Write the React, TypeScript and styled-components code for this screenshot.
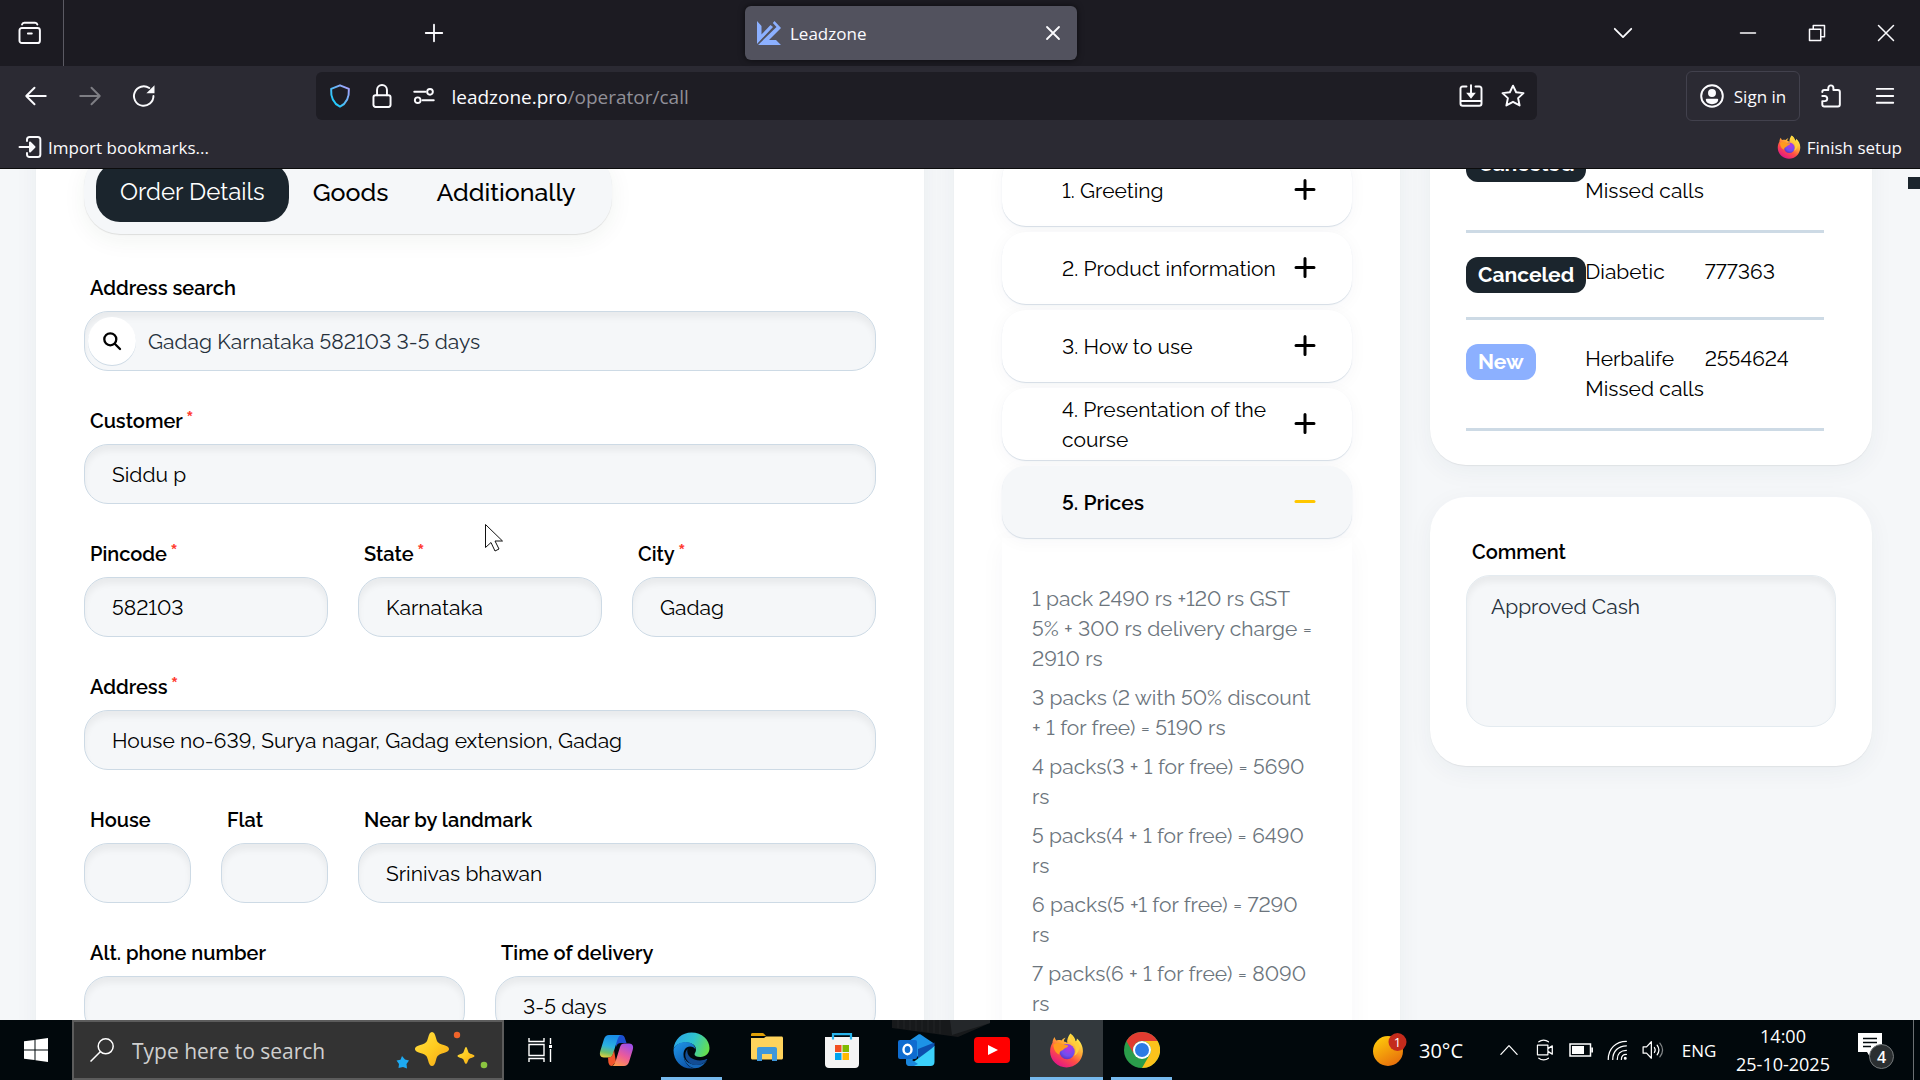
import React from "react";
import styled, { createGlobalStyle, css } from "styled-components";

const pageFont = `Raleway, Lato, "Open Sans", sans-serif`;
const systemFont = `"Segoe UI", "Open Sans", "Noto Sans", sans-serif`;

const GlobalStyle = createGlobalStyle`
  *, *::before, *::after { box-sizing: border-box; }
  body { margin: 0; background: #f5f7f9; font-family: ${pageFont}; font-variant-numeric: lining-nums; }
  button, input, textarea { font: inherit; font-variant-numeric: lining-nums; color: inherit; margin: 0; }
  button { border: 0; padding: 0; background: none; }
  svg { display: block; flex: none; }
`;

/* ---------- browser chrome ---------- */

const Screen = styled.div`
  height: 100vh;
  display: flex;
  flex-direction: column;
  overflow: hidden;
`;

const Chrome = styled.header`
  flex: none;
  background: #2b2a33;
  color: #fbfbfe;
  border-bottom: 1px solid #0c0c0d;
  font-family: ${systemFont};
  font-size: 17px;
`;

const TabStrip = styled.div`
  display: flex;
  align-items: center;
  height: 66px;
  background: #1c1b22;
`;

const IconButton = styled.button<{ $w?: number; $dim?: boolean }>`
  display: flex;
  flex: none;
  align-items: center;
  justify-content: center;
  width: ${(p) => p.$w ?? 54}px;
  height: 48px;
  opacity: ${(p) => (p.$dim ? 0.4 : 1)};
`;

const FirefoxView = styled.div`
  display: flex;
  align-items: center;
  height: 66px;
  padding-right: 3px;
  border-right: 1px solid #5b5a63;
`;

const Spacer = styled.div<{ $grow: number }>`
  flex: ${(p) => p.$grow} 1 0;
`;

const Tab = styled.div`
  display: flex;
  align-items: center;
  gap: 9px;
  width: 332px;
  height: 54px;
  padding: 0 12px;
  border-radius: 6px;
  background: #52525e;
  box-shadow: 0 0 6px rgba(0, 0, 0, 0.6);
`;

const TabTitle = styled.span`
  flex: 1;
`;

const WindowButtons = styled.div`
  display: flex;
  margin-left: 63px;
`;

const NavBar = styled.div`
  display: flex;
  align-items: center;
  height: 60px;
  padding: 0 8px 0 9px;
`;

const UrlBar = styled.div`
  display: flex;
  flex: 1219 1 0;
  align-items: center;
  height: 48px;
  padding: 0 3px;
  border-radius: 6px;
  background: #1e1d24;
`;

const Address = styled.div`
  flex: 1;
  padding: 2px 0 0 6px;
  font-size: 19px;
  color: #919098;
  b {
    font-weight: 400;
    color: #fbfbfe;
  }
`;

const SignIn = styled.button`
  display: flex;
  align-items: center;
  justify-content: center;
  gap: 10px;
  width: 114px;
  height: 50px;
  margin-right: 4px;
  border: 1px solid #42414d;
  border-radius: 6px;
`;

const Bookmarks = styled.div`
  display: flex;
  align-items: center;
  justify-content: space-between;
  height: 42px;
  padding: 0 18px;
`;

const Bookmark = styled.button`
  display: flex;
  align-items: center;
  gap: 6px;
`;

/* ---------- page ---------- */

const Viewport = styled.main`
  display: flex;
  flex: 1;
  min-height: 0;
  overflow: hidden;
  background: #f5f7f9;
  color: #000;
  font-size: 21px;
  line-height: 30px;
`;

const Columns = styled.div`
  display: grid;
  flex: 1;
  grid-template-columns: 888fr 446fr 442fr;
  gap: 30px;
  height: max-content;
  margin-top: -67px;
  padding: 0 36px;
`;

const ScrollTrack = styled.div`
  width: 12px;
  padding-top: 8px;
`;

const ScrollThumb = styled.div`
  height: 12px;
  background: #1b252d;
`;

const Panel = styled.section<{ $pad: string }>`
  padding: ${(p) => p.$pad};
  border-radius: 36px;
  background: #fff;
  box-shadow: 0 1px 1px rgba(0, 0, 0, 0.06), 0 6px 24px rgba(27, 60, 80, 0.05);
`;

const SideColumn = styled.div`
  display: flex;
  flex-direction: column;
  gap: 32px;
`;

const Tabs = styled.div`
  display: flex;
  width: max-content;
  padding: 12px;
  border-radius: 36px;
  background: #f5f7f9;
  box-shadow: 0 1px 1px rgba(0, 0, 0, 0.1), 0 6px 24px rgba(27, 60, 40, 0.06);
`;

const TabButton = styled.button<{ $active?: boolean }>`
  height: 60px;
  padding: 0 24px;
  border-radius: 24px;
  font-size: 25px;
  font-weight: 500;
  ${(p) =>
    p.$active &&
    css`
      background: #1b252d;
      color: #fff;
      font-size: 24px;
      font-weight: 400;
    `}
`;

const Form = styled.form`
  display: grid;
  grid-template-columns: repeat(6, 1fr);
  gap: 35px 30px;
  margin-top: 39px;
`;

const Field = styled.div<{ $span?: number }>`
  display: flex;
  flex-direction: column;
  gap: 8px;
  min-width: 0;
  grid-column: span ${(p) => p.$span ?? 6};
`;

const Label = styled.label`
  height: 30px;
  padding-left: 6px;
  font-size: 20px;
  font-weight: 600;
`;

const Star = styled.span`
  margin-left: 3px;
  color: #ff3b30;
  font-size: 24px;
  line-height: 24px;
`;

const inset = css`
  border: 1px solid #cddae5;
  border-radius: 24px;
  background: #f5f7f9;
  box-shadow: inset 0 6px 6px rgba(0, 0, 0, 0.05);
  outline: 0;
`;

const Input = styled.input`
  ${inset}
  width: 100%;
  height: 60px;
  padding: 0 27px;
`;

const SearchBox = styled.div`
  ${inset}
  display: flex;
  align-items: center;
  gap: 12px;
  height: 60px;
  padding: 0 3px;
`;

const SearchButton = styled.button`
  display: flex;
  align-items: center;
  justify-content: center;
  width: 48px;
  height: 48px;
  border-radius: 24px;
  background: #fff;
  box-shadow: 0 1px 0 #cddae5;
`;

const SearchInput = styled.input`
  flex: 1;
  height: 48px;
  padding: 0;
  border: 0;
  outline: 0;
  background: none;
  color: #26313c;
`;

const Script = styled.div`
  display: flex;
  flex-direction: column;
  gap: 6px;
`;

const Step = styled.button<{ $open?: boolean }>`
  display: flex;
  align-items: center;
  justify-content: space-between;
  height: 72px;
  padding: 0 36px 0 60px;
  border-radius: 24px;
  background: ${(p) => (p.$open ? "#f5f7f9" : "#fff")};
  color: ${(p) => (p.$open ? "#ffc700" : "#000")};
  font-weight: ${(p) => (p.$open ? 600 : 400)};
  text-align: left;
  box-shadow: 0 1px 1px #d5dde6, 0 3px 18px rgba(27, 60, 80, 0.04);
`;

const StepTitle = styled.span`
  padding-top: 2px;
  color: #000;
  white-space: nowrap;
`;

const StepBody = styled.div`
  display: flex;
  flex-direction: column;
  gap: 9px;
  padding: 46px 0 60px 30px;
  color: #6c757d;
  box-shadow: 0 6px 24px rgba(27, 60, 80, 0.04);
  white-space: nowrap;
`;

const Price = styled.p`
  margin: 0;
`;

const Orders = styled.table`
  display: block;
  margin-right: 12px;
  tbody {
    display: block;
  }
`;

const Order = styled.tr`
  display: grid;
  grid-template-columns: repeat(3, 1fr);
  padding: 24px 0;
  border-bottom: 3px solid #cddae5;
  td {
    padding: 0;
    min-width: 0;
    white-space: nowrap;
  }
`;

const Badge = styled.span<{ $tone: string }>`
  display: block;
  width: max-content;
  height: 36px;
  margin-bottom: -6px;
  padding: 0 12px;
  border-radius: 12px;
  background: ${(p) => p.$tone};
  color: #fff;
  font-weight: 700;
  line-height: 36px;
`;

const ShortOrder = styled(Order)`
  padding-bottom: 30px;
`;

const Comment = styled.textarea`
  ${inset}
  height: 152px;
  padding: 16px 24px;
  border-color: #e4ebf0;
  color: #26313c;
  line-height: 30px;
  resize: none;
`;

const Pointer = styled.svg`
  position: absolute;
  left: 485px;
  top: 524px;
`;

/* ---------- taskbar ---------- */

const Taskbar = styled.footer`
  position: relative;
  display: flex;
  flex: none;
  height: 60px;
  background: #01080c;
  color: #fff;
  font-family: ${systemFont};
  font-size: 17px;
`;

const Wallpaper = styled.svg`
  position: absolute;
  left: 892px;
  top: 0;
`;

const TaskSearch = styled.label`
  display: flex;
  align-items: center;
  width: 432px;
  padding: 0 14px 0 16px;
  border: 2px solid #5c5c5c;
  background: #333;
  font-size: 21px;
  input {
    flex: 1;
    min-width: 0;
    margin-left: 18px;
    padding: 2px 0 0;
    border: 0;
    outline: 0;
    background: none;
  }
  input::placeholder {
    color: #cfcfcf;
    opacity: 1;
  }
`;

const TaskButton = styled.button<{ $w?: number }>`
  display: flex;
  flex: none;
  align-items: center;
  justify-content: center;
  width: ${(p) => p.$w ?? 36}px;
  height: 60px;
`;

const Apps = styled.div`
  position: relative;
  display: flex;
  gap: 2px;
  margin-left: 4px;
`;

const TaskApp = styled.button<{ $state?: "open" | "active" }>`
  display: flex;
  align-items: center;
  justify-content: center;
  width: 73px;
  height: 60px;
  background: ${(p) =>
    p.$state === "active"
      ? "linear-gradient(#76b9ed, #76b9ed) bottom / 73px 3px no-repeat, #33393d"
      : p.$state === "open"
        ? "linear-gradient(#76b9ed, #76b9ed) bottom / 61px 3px no-repeat"
        : "none"};
`;

const Tray = styled.div`
  display: flex;
  margin-left: auto;
`;

const Weather = styled.button`
  display: flex;
  align-items: center;
  gap: 12px;
  padding-right: 28px;
  font-size: 20px;
`;

const Clock = styled.button`
  width: 112px;
  font-size: 18px;
  line-height: 28px;
`;

const ShowDesktop = styled.button`
  width: 7px;
  border-left: 1px solid #6b7073;
`;

/* ---------- icons ---------- */

type IconProps = { size?: number; sw?: number; children: React.ReactNode };
const Icon = ({ size = 24, sw = 1.3, children }: IconProps) => (
  <svg width={size} height={size} viewBox="0 0 16 16" fill="none" stroke="currentColor" strokeWidth={sw} strokeLinecap="round" strokeLinejoin="round">
    {children}
  </svg>
);

const Fox = ({ size, id }: { size: number; id: string }) => (
  <svg width={size} height={size} viewBox="0 0 32 32">
    <defs>
      <linearGradient id={id + "a"} x1="0.8" y1="0.05" x2="0.25" y2="0.95">
        <stop offset="0.05" stopColor="#fff44f" />
        <stop offset="0.4" stopColor="#ffa436" />
        <stop offset="0.65" stopColor="#ff4f44" />
        <stop offset="1" stopColor="#e31587" />
      </linearGradient>
      <radialGradient id={id + "b"} cx="0.6" cy="0.3" r="0.8">
        <stop offset="0" stopColor="#b833e1" />
        <stop offset="0.6" stopColor="#6e4ff0" />
        <stop offset="1" stopColor="#5a2cb0" />
      </radialGradient>
    </defs>
    <path fill={`url(#${id}a)`} d="M19.5 0.5c3.400 2.200 4.500 5 4.800 7.200 1-.5 1.200-1.700 1.200-2.700 3.600 3 5.800 7.500 5.500 12.200C30.500 25.500 24 31.500 16 31.500S1 25.300 1 17c0-3.200.8-5.800 2.200-8C3.200 7 4 5 5.200 3.600c.2 1.500.8 2.600 1.800 3.200 1.500-.6 3-.6 4.400 0 1-1.400 2.200-2.200 3.800-2.500-1 1-1.600 2.200-1.600 3.400 1.300.3 2.400.7 3.100 1.400C16.200 6.500 17.500 3 19.500.5z" />
    <circle cx="16.500" cy="17" r="7" fill={`url(#${id}b)`} />
    <path fill="#ff9a1f" d="M4 10.500c2-1.500 5-2 7.500-.6 1.600 1 3.400 1.200 5.200 1.200.9 0 1 .9.300 1.500-.9.900-2.200 1.200-3.100 1.700-1 .5-.9 1.400-2.200 1.800-1.300.5-2.400 1.700-2.200 3.600C6 18.500 4 14.500 4 10.500z" />
    <path fill="#ffcf3a" d="M19.500 1c-1 4 1 6 3 8.500 2.500 3.500 2.500 8 .4 11.300 3.600-1.700 5.500-6 4.400-10.300C26.500 7 24.500 7.500 23.700 8c-.3-3-1.700-5.500-4.200-7z" />
  </svg>
);

const Plus = ({ minus }: { minus?: boolean }) => (
  <svg width="22" height="22" viewBox="0 0 22 22" stroke="currentColor" strokeWidth="3" strokeLinecap="round">
    <path d={minus ? "M2 10.500h18" : "M2 10.500h18M11 1.500v18"} />
  </svg>
);

const Leadzone = () => (
  <svg width="24" height="24" viewBox="0 0 24 24">
    <path fill="#8cb0ff" d="M0 0 4.500 5v8.500L13.500 4l2.500 2L0 23zM17.500 0 24 7 12 19h7l5 5H1L19.500 6 15.800 2z" />
    <path stroke="#52525e" strokeWidth="1" fill="none" d="M.5 23.500 17.500 5.500 14.500 2.500" />
  </svg>
);

const Sparkles = () => (
  <svg width="92" height="40" viewBox="0 0 92 40">
    <defs>
      <linearGradient id="gold" x1="0" y1="0" x2="1" y2="1">
        <stop offset="0" stopColor="#ffe04a" />
        <stop offset="0.5" stopColor="#ffcb1f" />
        <stop offset="1" stopColor="#f2a31b" />
      </linearGradient>
    </defs>
    <path fill="url(#gold)" d="M36 2c2 0 3 2 4 6 1 4 2 5 6 6.500 5 1.500 7 2.500 7 4.500s-2 3-7 4.500c-4 1.500-5 2.500-6 6.500-1 4-2 6-4 6s-3-2-4-6c-1-4-2-5-6-6.500-5-1.500-7-2.500-7-4.500s2-3 7-4.500c4-1.500 5-2.500 6-6.500 1-4 2-6 4-6z" />
    <path fill="url(#gold)" d="M70 17c1.200 0 2 5 3 6s5.500 1.500 5.500 3-4.500 2-5.500 3-1.800 5-3 5-2-4-3-5-5.500-1.500-5.500-3 4.500-2 5.500-3 1.800-6 3-6z" />
    <path fill="#1eaaf1" d="m6 26 3 3.500 4 1-2.500 3.500.5 4.500-4-1.500L2.500 38 3 34l-2.500-3.500 4-.8z" />
    <circle cx="61" cy="5" r="3.200" fill="#f0642a" />
    <circle cx="88" cy="35" r="3.300" fill="#8bc540" />
  </svg>
);

const Copilot = () => (
  <svg width="35" height="31" viewBox="0 0 35 31">
    <defs>
      <linearGradient id="cpA" x1="0.3" y1="0" x2="0.1" y2="1">
        <stop offset="0" stopColor="#1a8fe8" />
        <stop offset="0.45" stopColor="#2bb0e0" />
        <stop offset="0.75" stopColor="#6fc06a" />
        <stop offset="1" stopColor="#f5d13a" />
      </linearGradient>
      <linearGradient id="cpB" x1="0.7" y1="0" x2="0.2" y2="1">
        <stop offset="0" stopColor="#a04ee6" />
        <stop offset="0.5" stopColor="#ec5b9a" />
        <stop offset="1" stopColor="#ff9a4a" />
      </linearGradient>
    </defs>
    <path fill="#1b4fd0" d="M17 0h5c2.500 0 3.500 1.500 4.200 4L27.500 8H22c-3 0-4 1.500-5 4z" />
    <path fill="url(#cpA)" d="M10 0h12c-2.300.8-3 3-4 6l-4 13c-.8 2.500-2 3.500-4.500 3.500H5C1 22.500.3 19.500 1.300 16L5 4C6 1.200 7.500 0 10 0z" />
    <path fill="#f2552c" d="M9 22.500c3 0 4.200-1.500 5-4L15 15l2 12-4 4c-2 0-3-1-3.600-3.500z" />
    <path fill="url(#cpB)" d="M25 31H13c2.300-.8 3-3 4-6l4-13c.8-2.500 2-3.500 4.500-3.500H30c4 0 4.700 3 3.700 6.500L30 27c-1 2.800-2.500 4-5 4z" />
  </svg>
);

const Edge = () => (
  <svg width="37" height="37" viewBox="0 0 37 37">
    <defs>
      <linearGradient id="edA" x1="0" y1="0.3" x2="1" y2="0.6">
        <stop offset="0" stopColor="#2ba6e8" />
        <stop offset="0.5" stopColor="#2fc3cf" />
        <stop offset="1" stopColor="#67e04b" />
      </linearGradient>
      <linearGradient id="edB" x1="0" y1="0" x2="0.6" y2="1">
        <stop offset="0" stopColor="#1f98ea" />
        <stop offset="1" stopColor="#0e54a8" />
      </linearGradient>
    </defs>
    <path fill="url(#edA)" d="M.5 17C1.500 7 9 .5 18.500.5 29 .5 36.500 8 36.500 16c0 5.500-4 9-9 9-4 0-6-1.500-6-2.800 0-1 1.500-1.700 1.500-4.700 0-4-4-7-9.500-7C7 10.500 2 13 .5 17z" />
    <path fill="url(#edB)" d="M.5 18c.5-4 5.500-8 12-8 5.500 0 10 3 10 7.500-1-2-3-3-5.500-3-4.500 0-6.500 4-6.500 8C10.500 30 16 36.500 22 36.200 10 38.500.5 30 .5 18z" />
    <path fill="#124c94" d="M14.500 17c-5 6-1 15 8 16 5 .5 9-2 11.500-5 .6-.8 0-1.300-.8-.9-2 1-4 1.400-6.200 1.400-8 0-14-5-12.500-11.500z" />
    <path fill="#1566b8" d="M10.500 22c0 7 5 13.500 11.500 14.200 5 0 9-3.500 11.800-7.500-3 3-7.300 4.800-11.300 4.300-7-1-12-5-12-11z" />
  </svg>
);

const Explorer = () => (
  <svg width="32" height="34" viewBox="0 0 32 34">
    <path fill="#e0a008" d="M0 1.500C0 .6.600 0 1.500 0h10c.7 0 1 .2 1.500.8L15 3H0z" />
    <path fill="#ffd35c" d="M0 4h13l2-1.500h15.500c.9 0 1.500.6 1.500 1.500v20c0 .9-.6 1.500-1.500 1.500h-29C.6 25.500 0 24.900 0 24z" transform="translate(0 1)" />
    <path fill="#3f97da" d="M6 28V16c0-1.200.8-2 2-2h16c1.200 0 2 .8 2 2v12h-5v-7h-10v7z" />
  </svg>
);

const Store = () => (
  <svg width="36" height="37" viewBox="0 0 36 37">
    <path fill="none" stroke="#27b4ec" strokeWidth="2.200" d="M9 8V2.200h18V8" />
    <path fill="#f4f4f4" d="M1 5h34v27c0 2.500-1.500 4-4 4H5c-2.500 0-4-1.500-4-4z" />
    <path fill="none" stroke="#27b4ec" strokeWidth="2.200" d="M9 4v3.500M27 4v3.500" />
    <path fill="#f25022" d="M11 13h6.500v7H11z" />
    <path fill="#7fba00" d="M18.500 13H25v7h-6.500z" />
    <path fill="#00a4ef" d="M11 21h6.500v7H11z" />
    <path fill="#ffb900" d="M18.500 21H25v7h-6.500z" />
  </svg>
);

const Outlook = () => (
  <svg width="37" height="32" viewBox="0 0 37 32">
    <path fill="#1d93e6" d="M8 9 20 .8c1-.6 2-.6 3 0L36 9.500V12L14 26H8z" />
    <path fill="#0c4fae" d="M20 15 36.500 8.500V13L20 25z" />
    <path fill="#3bd0fb" d="M36.500 12v16c0 2.500-1.500 4-4 4H10L33 15z" />
    <path fill="#1a86dc" d="M8 22 20 30l-4 2h-5c-2 0-3-1.500-3-3z" />
    <rect x="0" y="6" width="19" height="19" rx="2" fill="#0f6cd0" />
    <ellipse cx="9.500" cy="15.500" rx="4" ry="4.700" fill="none" stroke="#fff" strokeWidth="2.400" />
  </svg>
);

const YouTube = () => (
  <svg width="36" height="26" viewBox="0 0 36 26">
    <rect width="36" height="26" rx="4" fill="#f00" />
    <path fill="#fff" d="m14 8 10 5-10 5z" />
  </svg>
);

const ChromeLogo = () => (
  <svg width="36" height="36" viewBox="0 0 36 36">
    <circle cx="18" cy="18" r="18" fill="#2a9d4a" />
    <path fill="#e03c31" d="M2.400 9A18 18 0 0 1 33.600 9H18a9 9 0 0 0-7.800 13.500z" />
    <path fill="#fcc21b" d="M33.600 9A18 18 0 0 1 18 36l7.800-13.500A9 9 0 0 0 18 9z" />
    <circle cx="18" cy="18" r="9" fill="#fff" />
    <circle cx="18" cy="18" r="7" fill="#2c7be5" />
  </svg>
);

const Sun = () => (
  <svg width="34" height="34" viewBox="0 0 34 34">
    <defs>
      <linearGradient id="sun" x1="0.2" y1="0" x2="0.8" y2="1">
        <stop offset="0" stopColor="#ffcb0a" />
        <stop offset="1" stopColor="#e66a0c" />
      </linearGradient>
    </defs>
    <circle cx="15" cy="18" r="15" fill="url(#sun)" />
    <circle cx="24.500" cy="9" r="9" fill="#c42b1c" />
    <text x="24.500" y="14" fill="#fff" fontFamily="Open Sans" fontSize="13" textAnchor="middle">1</text>
  </svg>
);

const Notifications = () => (
  <svg width="38" height="38" viewBox="0 0 38 38">
    <path fill="#fff" d="M1 2h24v19H17l-4 5-3-5H1z" />
    <path stroke="#01080c" strokeWidth="1.400" d="M6 7.500h14M6 11.500h14M6 15.500h8" />
    <circle cx="24.500" cy="25.500" r="12" fill="#2b2f31" stroke="#74787a" />
    <text x="24.500" y="31.500" fill="#fff" fontFamily="Open Sans" fontSize="16" fontWeight="600" textAnchor="middle">4</text>
  </svg>
);

/* ---------- data ---------- */

const steps = [
  { title: "1. Greeting" },
  { title: "2. Product information" },
  { title: "3. How to use" },
  { title: "4. Presentation of the\ncourse" },
  { title: "5. Prices", open: true },
];

const prices = [
  "1 pack 2490 rs +120 rs GST\n5% + 300 rs delivery charge =\n2910 rs",
  "3 packs (2 with 50% discount\n+ 1 for free) = 5190 rs",
  "4 packs(3 + 1 for free) = 5690\nrs",
  "5 packs(4 + 1 for free) = 6490\nrs",
  "6 packs(5 +1 for free) = 7290\nrs",
  "7 packs(6 + 1 for free) = 8090\nrs",
];

const fields = [
  { id: "customer", label: "Customer", value: "Siddu p", required: true, span: 6 },
  { id: "pincode", label: "Pincode", value: "582103", required: true, span: 2 },
  { id: "state", label: "State", value: "Karnataka", required: true, span: 2 },
  { id: "city", label: "City", value: "Gadag", required: true, span: 2 },
  { id: "address", label: "Address", value: "House no-639, Surya nagar, Gadag extension, Gadag", required: true, span: 6 },
  { id: "house", label: "House", value: "", span: 1 },
  { id: "flat", label: "Flat", value: "", span: 1 },
  { id: "landmark", label: "Near by landmark", value: "Srinivas bhawan", span: 4 },
  { id: "phone", label: "Alt. phone number", value: "", span: 3 },
  { id: "delivery", label: "Time of delivery", value: "3-5 days", span: 3 },
];

const Lines = ({ text }: { text: string }) => (
  <>
    {text.split("\n").map((line, i) => (
      <React.Fragment key={i}>
        {i > 0 && <br />}
        {line}
      </React.Fragment>
    ))}
  </>
);

/* ---------- sections ---------- */

const BrowserChrome = () => (
  <Chrome>
    <TabStrip>
      <FirefoxView>
        <IconButton $w={60} aria-label="Recent browsing">
          <Icon>
            <rect x="1" y="4.700" width="13.600" height="10" rx="1.600" />
            <path d="M2.700 2.300c.2-.8.700-1.200 1.500-1.200h7.200c.8 0 1.300.4 1.500 1.200M6.600 8.300h2.600" />
          </Icon>
        </IconButton>
      </FirefoxView>
      <Spacer $grow={343} />
      <IconButton aria-label="New tab">
        <Icon sw={1.200}><path d="M2.500 8h11M8 2.500v11" /></Icon>
      </IconButton>
      <Spacer $grow={284} />
      <Tab>
        <Leadzone />
        <TabTitle>Leadzone</TabTitle>
        <IconButton $w={24} aria-label="Close tab">
          <Icon sw={1.200}><path d="m4 4 8 8M12 4l-8 8" /></Icon>
        </IconButton>
      </Tab>
      <Spacer $grow={519} />
      <IconButton aria-label="List all tabs">
        <Icon sw={1.200}><path d="m2.500 5.200 5.500 5.500 5.500-5.500" /></Icon>
      </IconButton>
      <WindowButtons>
        <IconButton $w={69} aria-label="Minimize"><Icon sw={1}><path d="M3 8h10" /></Icon></IconButton>
        <IconButton $w={69} aria-label="Restore">
          <Icon sw={1}><path d="M3 5.500h7.500V13H3zM5.500 5.200V3H13v7.500h-2.200" /></Icon>
        </IconButton>
        <IconButton $w={69} aria-label="Close"><Icon sw={1}><path d="m3 3 10 10M13 3 3 13" /></Icon></IconButton>
      </WindowButtons>
    </TabStrip>
    <NavBar>
      <IconButton aria-label="Back"><Icon><path d="M1.500 8h13M7 2.500 1.500 8 7 13.500" /></Icon></IconButton>
      <IconButton aria-label="Forward" $dim><Icon><path d="M1.500 8h13M9 2.500 14.500 8 9 13.500" /></Icon></IconButton>
      <IconButton aria-label="Reload">
        <Icon><path d="M14.300 8A6.500 6.500 0 1 1 11.500 2.700" /><path fill="currentColor" stroke="none" d="M15 .8v5.400H9.600z" /></Icon>
      </IconButton>
      <Spacer $grow={146} />
      <UrlBar>
        <IconButton $w={42} aria-label="Tracking protection">
          <svg width="24" height="24" viewBox="0 0 16 16" fill="none" strokeWidth="1.300" strokeLinejoin="round">
            <defs>
              <linearGradient id="shield" x1="1" y1="0" x2="0" y2="1">
                <stop offset="0" stopColor="#b5a0ff" />
                <stop offset="0.500" stopColor="#5bb8f5" />
                <stop offset="1" stopColor="#00d5ff" />
              </linearGradient>
            </defs>
            <path stroke="url(#shield)" d="M8 .9 13.900 3.300c.3 5-1.400 9.600-5.900 11.800C3.500 12.900 1.800 8.300 2.100 3.300z" />
          </svg>
        </IconButton>
        <IconButton $w={42} aria-label="Connection secure">
          <Icon><rect x="2.300" y="7.500" width="11.400" height="7.800" rx="1.400" /><path d="M4.700 7.500V4a3.300 3.300 0 0 1 6.600 0v3.500" /></Icon>
        </IconButton>
        <IconButton $w={42} aria-label="Permissions">
          <Icon><path d="M1.500 5.200h7.500M14.500 10.800H7" /><circle cx="12" cy="5.200" r="1.900" /><circle cx="3.800" cy="10.800" r="1.900" /></Icon>
        </IconButton>
        <Address><b>leadzone.pro</b>/operator/call</Address>
        <IconButton $w={42} aria-label="Install site">
          <Icon>
            <path d="M5 1.700H2.500c-1 0-1.500.6-1.500 1.500V13c0 .9.600 1.500 1.500 1.500h11c.9 0 1.500-.6 1.500-1.500V3.200c0-.9-.5-1.500-1.500-1.500H11M1 11.300h14M8 .8v6" />
            <path fill="currentColor" stroke="none" d="M4.800 5.800h6.400L8 9.800z" />
          </Icon>
        </IconButton>
        <IconButton $w={42} aria-label="Bookmark this page">
          <Icon><path d="m8 1.100 2.100 4.400 4.900.6-3.600 3.300 1 4.900L8 11.900l-4.400 2.400 1-4.900L1 6.100l4.900-.6z" /></Icon>
        </IconButton>
      </UrlBar>
      <Spacer $grow={150} />
      <SignIn>
        <Icon>
          <circle cx="8" cy="8" r="7.200" />
          <circle cx="8" cy="6" r="2" fill="currentColor" />
          <path fill="currentColor" d="M4.500 10.500h7c0 1.300-1.500 2.300-3.500 2.300s-3.500-1-3.500-2.300z" />
        </Icon>
        Sign in
      </SignIn>
      <IconButton aria-label="Extensions">
        <Icon>
          <path d="M2.200 5.300c0-.8.500-1.300 1.300-1.300h2.700V2.600a1.700 1.700 0 0 1 3.400 0V4h3c.8 0 1.300.5 1.300 1.300v8.400c0 .8-.5 1.300-1.300 1.300H3.500c-.8 0-1.300-.5-1.300-1.300v-2.300h1.600a1.700 1.700 0 0 0 0-3.400H2.200" />
        </Icon>
      </IconButton>
      <IconButton aria-label="Open application menu">
        <Icon sw={1.200}><path d="M2.500 3.300h11M2.500 8h11M2.500 12.500h11" /></Icon>
      </IconButton>
    </NavBar>
    <Bookmarks>
      <Bookmark>
        <Icon>
          <path d="M6 4V3c0-1 .6-1.700 1.700-1.700h5.500c1 0 1.700.7 1.700 1.700v10c0 1-.7 1.700-1.700 1.700H7.700C6.600 14.700 6 14 6 13v-1M1 8h7" />
          <path fill="currentColor" d="m8 5 3 3-3 3z" />
        </Icon>
        Import bookmarks...
      </Bookmark>
      <Bookmark>
        <Fox size={24} id="foxSmall" />
        Finish setup
      </Bookmark>
    </Bookmarks>
  </Chrome>
);

const OrderPanel = () => (
  <Panel $pad="48px 48px 60px">
    <Tabs>
      <TabButton $active>Order Details</TabButton>
      <TabButton>Goods</TabButton>
      <TabButton>Additionally</TabButton>
    </Tabs>
    <Form onSubmit={(e) => e.preventDefault()}>
      <Field>
        <Label htmlFor="search">Address search</Label>
        <SearchBox>
          <SearchButton aria-label="Search">
            <svg width="20" height="20" viewBox="0 0 20 20" fill="none" stroke="#000" strokeWidth="2.300" strokeLinecap="round">
              <circle cx="8.300" cy="8.300" r="6" />
              <path d="m13 13 5 5" />
            </svg>
          </SearchButton>
          <SearchInput id="search" defaultValue="Gadag Karnataka 582103 3-5 days" />
        </SearchBox>
      </Field>
      {fields.map((f) => (
        <Field key={f.id} $span={f.span}>
          <Label htmlFor={f.id}>
            {f.label}
            {f.required && <Star>*</Star>}
          </Label>
          <Input id={f.id} defaultValue={f.value} />
        </Field>
      ))}
    </Form>
  </Panel>
);

const ScriptPanel = () => (
  <Panel $pad="52px 48px 0">
    <Script>
      {steps.map((s) => (
        <Step key={s.title} $open={s.open}>
          <StepTitle><Lines text={s.title} /></StepTitle>
          <Plus minus={s.open} />
        </Step>
      ))}
    </Script>
    <StepBody>
      {prices.map((p) => (
        <Price key={p}><Lines text={p} /></Price>
      ))}
    </StepBody>
  </Panel>
);

const HistoryPanels = () => (
  <SideColumn>
    <Panel $pad="20px 36px 34px">
      <Orders>
        <tbody>
          <Order>
            <td><Badge $tone="#1b252d">Canceled</Badge></td>
            <td><br />Missed calls</td>
            <td />
          </Order>
          <ShortOrder>
            <td><Badge $tone="#1b252d">Canceled</Badge></td>
            <td>Diabetic</td>
            <td>777363</td>
          </ShortOrder>
          <Order>
            <td><Badge $tone="#8cb0ff">New</Badge></td>
            <td>Herbalife<br />Missed calls</td>
            <td>2554624</td>
          </Order>
        </tbody>
      </Orders>
    </Panel>
    <Panel $pad="40px 36px 39px">
      <Field>
        <Label htmlFor="comment">Comment</Label>
        <Comment id="comment" defaultValue="Approved Cash" />
      </Field>
    </Panel>
  </SideColumn>
);

const WindowsTaskbar = () => (
  <Taskbar>
    <Wallpaper width="100" height="22" viewBox="0 0 100 22">
      <path fill="#17191b" d="M0 0h98v3L66 17 0 8z" />
      <path fill="#24272a" d="M58 0h40v3L60 15z" />
      <path stroke="#222527" d="M6 0v8M12 0v9M18 0v10M24 0v11M30 0v11M36 0v12M42 0v13M48 0v14" />
    </Wallpaper>
    <TaskButton $w={72} aria-label="Start">
      <svg width="24" height="24" viewBox="0 0 24 24" fill="#fff">
        <path d="M0 3.300 10.500 2v9.500H0zM11.500 1.800 24 0v11.500H11.500zM0 12.500h10.500V22L0 20.700zM11.500 12.500H24V24l-12.500-1.800z" />
      </svg>
    </TaskButton>
    <TaskSearch>
      <svg width="24" height="24" viewBox="0 0 24 24" fill="none" stroke="#fff" strokeWidth="1.500">
        <circle cx="15.700" cy="8.300" r="7.500" />
        <path d="M10.300 13.700.5 23.500" />
      </svg>
      <input aria-label="Search" placeholder="Type here to search" />
      <Sparkles />
    </TaskSearch>
    <TaskButton $w={72} aria-label="Task view">
      <svg width="24" height="24" viewBox="0 0 24 24" fill="none" stroke="#fff" strokeWidth="1.400">
        <path d="M1 6.500h15v11H1zM1 0v3.500h15V0M1 24v-3.500h15V24M22.500 0v6M22.500 11v13" />
        <path fill="#fff" stroke="none" d="M21 7h3v3h-3z" />
      </svg>
    </TaskButton>
    <Apps>
      <TaskApp aria-label="Copilot"><Copilot /></TaskApp>
      <TaskApp aria-label="Edge" $state="open"><Edge /></TaskApp>
      <TaskApp aria-label="File Explorer"><Explorer /></TaskApp>
      <TaskApp aria-label="Store"><Store /></TaskApp>
      <TaskApp aria-label="Outlook"><Outlook /></TaskApp>
      <TaskApp aria-label="YouTube"><YouTube /></TaskApp>
      <TaskApp aria-label="Firefox" $state="active"><Fox size={35} id="foxLarge" /></TaskApp>
      <TaskApp aria-label="Chrome" $state="open"><ChromeLogo /></TaskApp>
    </Apps>
    <Tray>
      <Weather><Sun />30°C</Weather>
      <TaskButton aria-label="Show hidden icons"><Icon size={20} sw={1}><path d="m1.500 11.500 6.500-7 6.500 7" /></Icon></TaskButton>
      <TaskButton aria-label="Meet now">
        <Icon size={22} sw={0.9}><path d="M2.500 4.500h7.600v7H2.500zM10.100 7l3.200-2v6l-3.200-2M3.500 2c2-1.600 5-1.600 7 0M3.500 14c2 1.600 5 1.600 7 0" /></Icon>
      </TaskButton>
      <TaskButton aria-label="Battery">
        <svg width="24" height="16" viewBox="0 0 24 16"><path fill="none" stroke="#fff" strokeWidth="1.500" d="M1 2h20.500v12H1zM23.200 5.500v5" /><path fill="#fff" d="M3 4h12v8H3z" /></svg>
      </TaskButton>
      <TaskButton aria-label="Network">
        <Icon size={20} sw={1}><path d="M1 15.500C1 7 7 1 15.500 1M4.600 15.500c0-6.500 4.500-10.900 10.900-10.900M8.200 15.500c0-4.500 2.800-7.300 7.300-7.300M11.500 15.500c0-2.500 1.500-4 4-4" /><circle cx="14.600" cy="14.600" r="0.700" fill="currentColor" /></Icon>
      </TaskButton>
      <TaskButton aria-label="Volume">
        <Icon size={22} sw={0.9}><path d="M.8 5.700h2.500L6.800 2v12l-3.500-3.700H.8zM9 6.200c.8 1.200.8 2.400 0 3.600M11 4.500c1.700 2.300 1.700 4.700 0 7" /><path opacity="0.500" d="M13 3c2.600 3.300 2.600 6.700 0 10" /></Icon>
      </TaskButton>
      <TaskButton $w={56}>ENG</TaskButton>
      <Clock>14:00<br />25-10-2025</Clock>
      <TaskButton $w={74} aria-label="Notifications"><Notifications /></TaskButton>
      <ShowDesktop aria-label="Show desktop" />
    </Tray>
  </Taskbar>
);

export default function App() {
  return (
    <Screen>
      <GlobalStyle />
      <BrowserChrome />
      <Viewport>
        <Columns>
          <OrderPanel />
          <ScriptPanel />
          <HistoryPanels />
        </Columns>
        <ScrollTrack><ScrollThumb /></ScrollTrack>
      </Viewport>
      <WindowsTaskbar />
      <Pointer width="18" height="28" viewBox="0 0 18 28">
        <path fill="#fff" stroke="#111" d="M.5.500v23l5.500-5 4 8.500 4-2-4-8h7.500z" />
      </Pointer>
    </Screen>
  );
}
